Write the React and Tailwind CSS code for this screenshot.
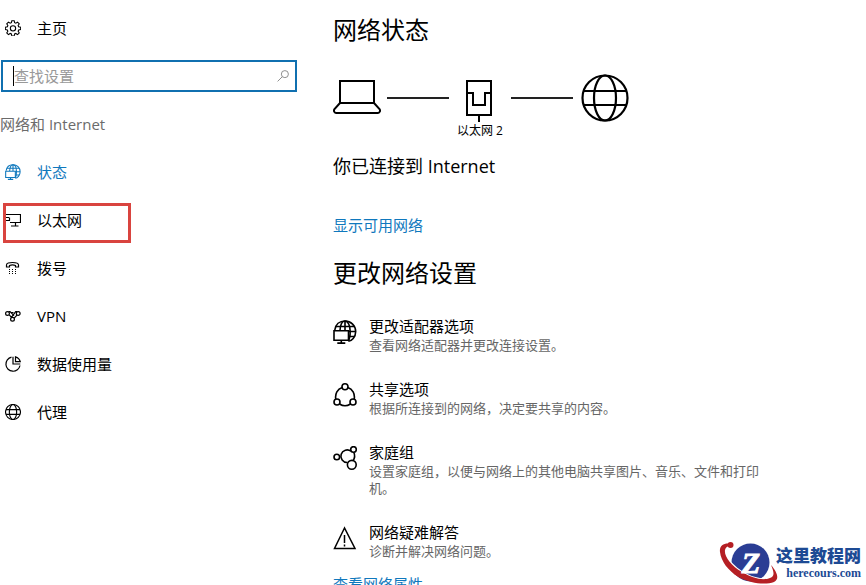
import React from 'react';

function Svg({ box = 16, className = 'size-4', width = 1.1, children }) {
  return (
    <svg
      viewBox={`0 0 ${box} ${box}`}
      className={`shrink-0 ${className}`}
      fill="none"
      stroke="currentColor"
      strokeWidth={width}
      aria-hidden="true"
    >
      {children}
    </svg>
  );
}

function GearIcon() {
  return (
    <Svg box={24} width={1.6}>
      <path d="M10.200 1h3.600l.6 3 1.900.8 2.500-1.700 2.600 2.600-1.700 2.500.8 1.900 3 .6v3.600l-3 .6-.8 1.900 1.700 2.500-2.600 2.600-2.500-1.700-1.900.8-.6 3h-3.600l-.6-3-1.900-.8-2.500 1.700-2.600-2.600 1.700-2.500-.8-1.900-3-.6v-3.600l3-.6.8-1.900-1.700-2.500 2.600-2.600 2.500 1.700 1.900-.8z" />
      <circle cx="12" cy="12.500" r="4" />
    </Svg>
  );
}

function SearchIcon() {
  return (
    <Svg className="size-3" width={1.3}>
      <circle cx="10.500" cy="5.500" r="4.700" />
      <path d="M7 9 .8 15.200" />
    </Svg>
  );
}

function NetworkIcon({ className = 'size-4' }) {
  return (
    <Svg box={24} className={className} width={1.6}>
      <path d="M1.800 10C2.500 4.500 6.500 1 12 1c6 0 10.700 4.700 10.700 10.500S18.500 21 15.500 21.300" />
      <path d="M7 10.500C7.300 5 9 1 12 1s5.200 4.500 5.200 10.500c0 4-.7 7.500-2 9.500M12 1v9.500M3 6.500h18.500M15.500 11.500h7M15.500 16.500h6" />
      <path d="M1 10.800h14.500v9.400H1zM8.300 20v3M4.300 23.100h8" />
    </Svg>
  );
}

function EthernetIcon() {
  return (
    <Svg width={1.2}>
      <path d="M5 2.500h10.500v8H5M10.500 10.500v3.500M6 14h7.500M1 2.500h4M1 5.500h3M1 8.500h4M4.500 5.500v3" />
    </Svg>
  );
}

function DialIcon() {
  return (
    <Svg width={1.2}>
      <path d="M1.500 7V5c0-1.600 2.700-2.500 6-2.500s6 .9 6 2.500v2h-3V5.500c-1.800-.7-4.200-.7-6 0V7z" />
      <path d="M4 9.500h1m2 0h1m2 0h1M4 11.500h1m2 0h1m2 0h1M4 13.500h1m2 0h1m2 0h1" />
    </Svg>
  );
}

function VpnIcon() {
  return (
    <Svg width={1.2}>
      <circle cx="2.500" cy="5.500" r="1.900" />
      <circle cx="13.200" cy="5.500" r="1.900" />
      <circle cx="7.500" cy="11.200" r="1.900" />
      <path d="M3.500 3.600h1.500l4 4M4.200 6.800l2.300 2.600M12.200 3.600h-1.500L6 9.800M9.200 10.200 12 7.200M6.500 4.500h2" />
    </Svg>
  );
}

function PieIcon() {
  return (
    <Svg width={1.200}>
      <path d="M7 1.200a7 7 0 1 0 8 8.800H7z" stroke="none" />
      <path d="M6.500 1.200a7.100 7.100 0 1 0 8.500 8.300M8 .8V8h7.300" />
      <path d="M10.500.8a7 7 0 0 1 4.800 4.900h-4.800z" />
    </Svg>
  );
}

function GlobeIcon({ className = 'size-4', width = 3.4 }) {
  return (
    <Svg box={48} className={className} width={width}>
      <circle cx="24" cy="24" r="22.500" />
      <ellipse cx="24" cy="24" rx="11" ry="22.500" />
      <path d="M3 17h42M3 31h42" />
    </Svg>
  );
}

function LaptopIcon() {
  return (
    <Svg box={48} className="size-12" width={2}>
      <path d="M7 7h34v22H7z" />
      <path d="M7 29l-5.500 6c-1 1.500-.5 4 1.500 4h42c2 0 2.500-2.500 1.500-4L41 29" />
    </Svg>
  );
}

function PortIcon() {
  return (
    <Svg box={48} className="size-12" width={2}>
      <path d="M11 7h24v34H11zM11 19h6v12h12V19h6M23 41v7" />
    </Svg>
  );
}

function ShareIcon() {
  return (
    <Svg box={24} className="size-6" width={1.6}>
      <circle cx="12" cy="3.800" r="3" />
      <circle cx="4" cy="19" r="3" />
      <circle cx="20" cy="19" r="3" />
      <path d="M9.200 4.500C4.500 6 1.800 11 2.800 16.200M14.800 4.500c4.700 1.500 7.400 6.500 6.400 11.700M6.500 21c3.500 2.300 7.500 2.300 11 0" />
    </Svg>
  );
}

function HomegroupIcon() {
  return (
    <Svg box={24} className="size-6" width={1.6}>
      <circle cx="3.800" cy="11" r="2.800" />
      <circle cx="20.500" cy="3.500" r="2.800" />
      <circle cx="18.800" cy="18.800" r="4.400" />
      <path d="M18 5.200a6.300 6.300 0 1 0-3.600 11.300M20.800 6.300c1.200 2.700 1 5.700-.6 8.200" />
    </Svg>
  );
}

function WarningIcon() {
  return (
    <Svg box={24} className="size-6" width={1.500}>
      <path d="M11.500 2 1.500 22.500h20.500zM11.500 9v8M11.500 18.500v2" />
    </Svg>
  );
}

const navItems = [
  { label: '状态', icon: <NetworkIcon />, active: true },
  { label: '以太网', icon: <EthernetIcon />, marked: true },
  { label: '拨号', icon: <DialIcon /> },
  { label: 'VPN', icon: <VpnIcon /> },
  { label: '数据使用量', icon: <PieIcon /> },
  { label: '代理', icon: <GlobeIcon /> },
];

const settings = [
  {
    title: '更改适配器选项',
    text: '查看网络适配器并更改连接设置。',
    icon: <NetworkIcon className="size-6" />,
  },
  {
    title: '共享选项',
    text: '根据所连接到的网络，决定要共享的内容。',
    icon: <ShareIcon />,
  },
  {
    title: '家庭组',
    text: '设置家庭组，以便与网络上的其他电脑共享图片、音乐、文件和打印机。',
    icon: <HomegroupIcon />,
  },
  {
    title: '网络疑难解答',
    text: '诊断并解决网络问题。',
    icon: <WarningIcon />,
  },
];

function Sidebar() {
  return (
    <aside className="w-[297px] shrink-0 pt-1">
      <a href="#home" className="flex h-12 items-center gap-4 pl-[5px]">
        <GearIcon />
        主页
      </a>
      <label className="mt-2 ml-px flex h-8 items-center border-2 border-[#1070b0] pr-[6px] pl-[10px]">
        <span className="h-5 w-px bg-black" />
        <input
          type="text"
          aria-label="查找设置"
          placeholder="查找设置"
          className="h-6 min-w-0 flex-1 outline-none placeholder:text-[#999999]"
        />
        <span className="text-[#8c8c8c]">
          <SearchIcon />
        </span>
      </label>
      <h2 className="mt-5 leading-6 text-[#6b6b6b]">网络和 Internet</h2>
      <nav className="mt-3">
        {navItems.map((item) => (
          <a
            key={item.label}
            href="#section"
            className={`relative flex h-12 items-center gap-4 pl-[5px] ${item.active ? 'text-[#0f78bd]' : ''}`}
          >
            {item.icon}
            {item.label}
            {item.marked && (
              <span className="absolute top-[7px] left-[3px] h-10 w-32 border-3 border-[#d9443f]" />
            )}
          </a>
        ))}
      </nav>
    </aside>
  );
}

function Diagram() {
  return (
    <div className="mt-7 flex items-start">
      <LaptopIcon />
      <span className="mt-[23px] ml-[6px] h-[2px] w-[62px] bg-[#222222]" />
      <div className="flex w-[62px] flex-col items-center text-xs leading-[18px]">
        <PortIcon />
        <span className="whitespace-nowrap">以太网 2</span>
      </div>
      <span className="mt-[23px] h-[2px] w-[62px] bg-[#222222]" />
      <div className="ml-2">
        <GlobeIcon className="size-12" width={2.2} />
      </div>
    </div>
  );
}

function Watermark() {
  return (
    <div className="absolute right-[5px] bottom-0 flex items-start text-[#1d4a94]">
      <svg viewBox="0 0 64 45" className="-mr-1 h-[45px] w-16" aria-hidden="true">
        <circle cx="34.500" cy="22.500" r="19" fill="#2a3d94" />
        <path
          d="M12 6C7 6 6 10 8 15c5 10 17 20 31 24 11 3 18 1 18-6"
          fill="none"
          stroke="#ffffff"
          strokeWidth="4"
        />
        <path
          d="M16 4C9 2 3 5 4 12c1 9 8 19 19 25 12 7 27 8 35 5 6-3 3-10-3-17 3 7 4 11-1 13-7 3-18 0-28-6C15 26 8 16 9 10c1-4 4-4 7-4z"
          fill="#b51f24"
        />
        <path d="M11 23c3 9 10 15 19 17l-8-8z" fill="#b51f24" />
        <circle cx="14.500" cy="5" r="3" fill="#b51f24" />
        <text
          x="35"
          y="33"
          textAnchor="middle"
          fill="#ffffff"
          stroke="#ffffff"
          className="font-['Liberation_Serif',serif] text-[30px] font-bold italic"
        >
          Z
        </text>
      </svg>
      <div className="flex flex-col items-end pt-[5px]">
        <span className="font-['Noto_Sans_CJK_SC',sans-serif] text-[17px] leading-5 font-black">
          这里教程网
        </span>
        <span className="font-['Liberation_Serif',serif] text-xs leading-4 font-bold">
          herecours.com
        </span>
      </div>
    </div>
  );
}

export default function App() {
  return (
    <div className="relative flex h-screen overflow-hidden bg-white font-['Open_Sans','Noto_Sans_CJK_SC',sans-serif] text-[15px] text-black">
      <Sidebar />
      <main className="ml-9 max-w-[432px] flex-1 pt-[14px]">
        <h1 className="text-2xl">网络状态</h1>
        <Diagram />
        <p className="mt-3 text-lg">你已连接到 Internet</p>
        <a href="#networks" className="mt-[33px] block leading-6 text-[#0f78bd]">
          显示可用网络
        </a>
        <h2 className="mt-5 text-2xl">更改网络设置</h2>
        <ul className="mt-[27px] flex flex-col gap-[25px]">
          {settings.map((item) => (
            <li key={item.title}>
              <a href="#setting" className="flex gap-3">
                <span className="pt-1">{item.icon}</span>
                <span className="flex-1">
                  <span className="block leading-[21px]">{item.title}</span>
                  <span className="block text-[13px] leading-[17px] text-[#666666]">
                    {item.text}
                  </span>
                </span>
              </a>
            </li>
          ))}
        </ul>
        <a href="#properties" className="mt-3 block leading-6 text-[#0f78bd]">
          查看网络属性
        </a>
      </main>
      <Watermark />
    </div>
  );
}
